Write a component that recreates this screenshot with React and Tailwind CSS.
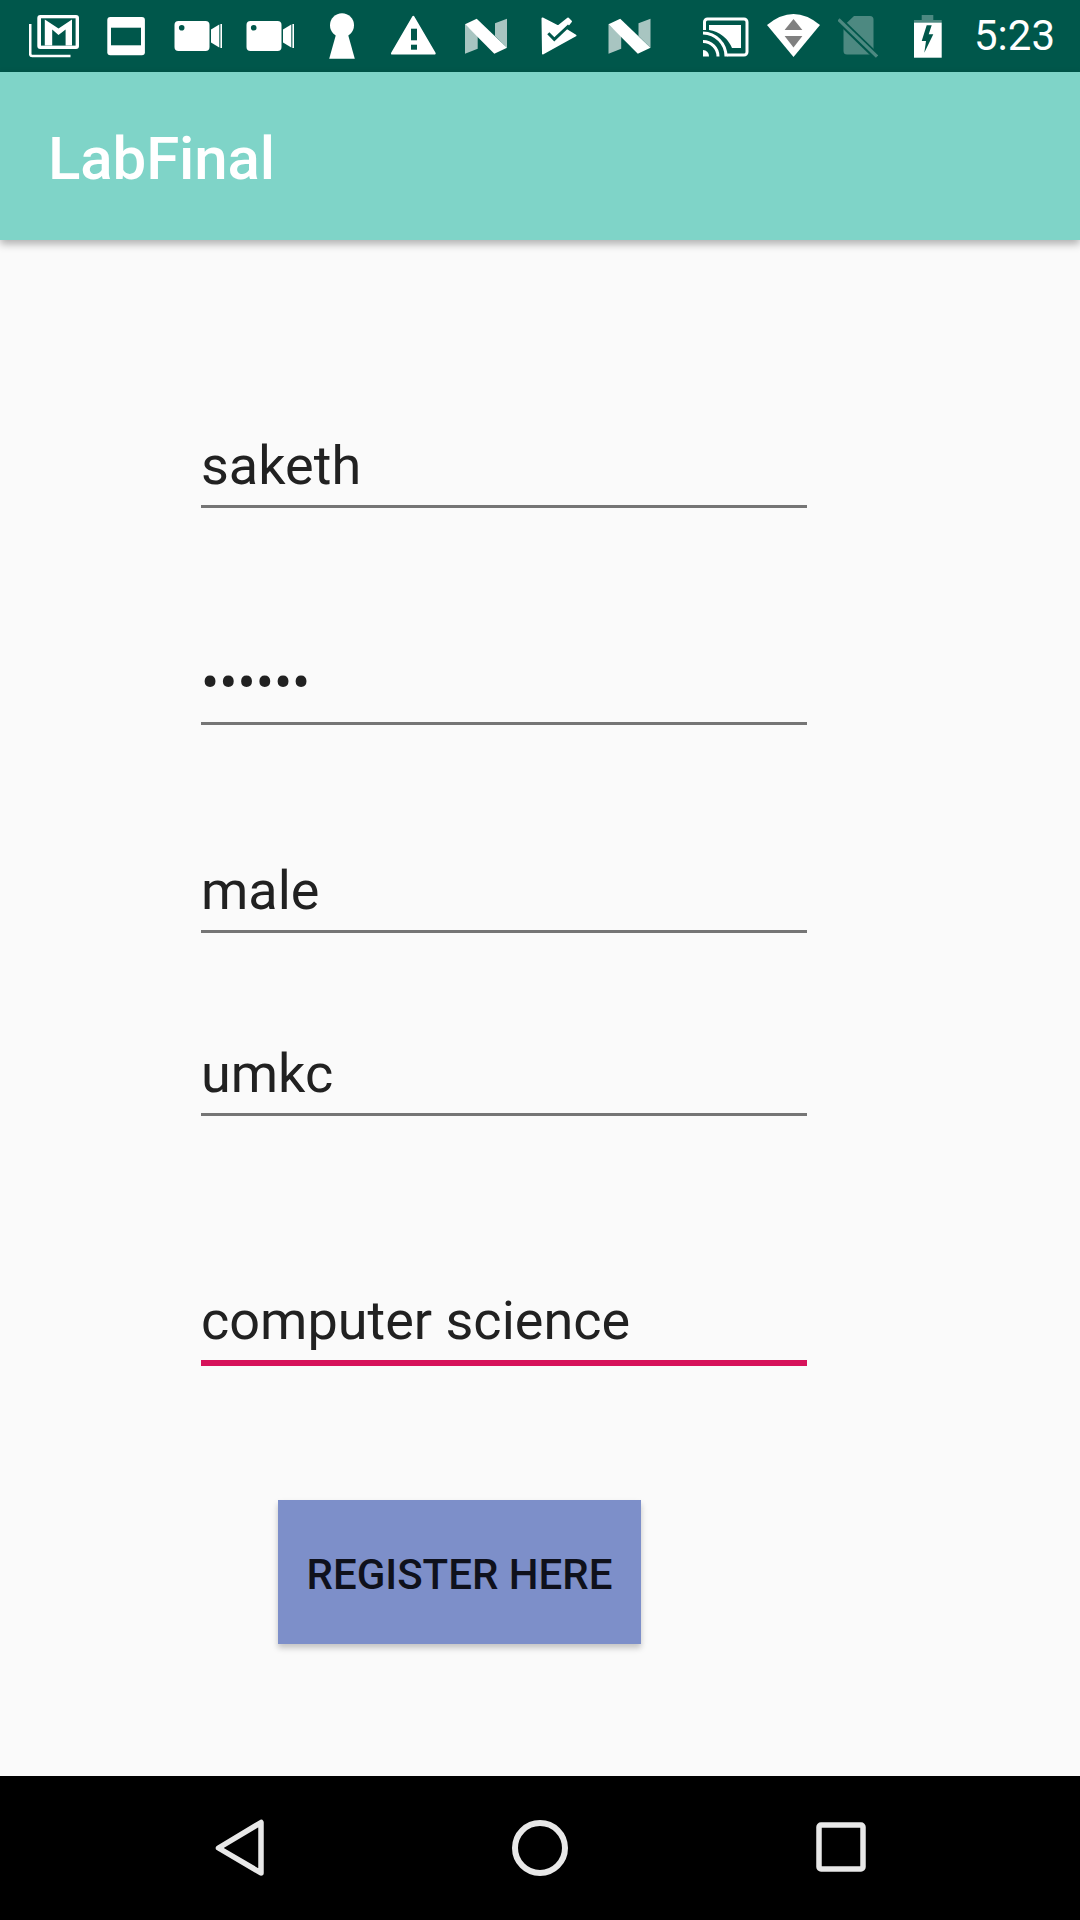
const DARK = "#00574b";
const DIM = "#4d8981";

function Ico({ x, w, className, children }) {
  return (
    <svg viewBox={`${x} 0 ${w} 72`} width={w} height={72} className={"block shrink-0 " + className}>
      {children}
    </svg>
  );
}

function Cam({ dx = 0 }) {
  return (
    <g transform={`translate(${dx} 0)`}>
      <rect x="174.5" y="21" width="35" height="30" rx="4" fill="#fff" />
      <circle cx="181.7" cy="27.7" r="2.8" fill={DARK} />
      <polygon points="211,29.5 219.3,24.5 219.3,47.5 211,42.5" fill="#fff" />
      <rect x="220.4" y="24" width="1.6" height="24" fill="#fff" />
    </g>
  );
}

function NIcon({ dx = 0 }) {
  return (
    <g transform={`translate(${dx} 0)`}>
      <polygon points="465,24.3 477.7,36 477.7,48.7 465,53.7" fill="#fff" fillOpacity="0.66" />
      <polygon points="495,23.3 507,18.7 507,47.7 495,36" fill="#fff" fillOpacity="0.66" />
      <polygon points="465,24.3 476.7,18.7 507,47.7 494.3,53.7" fill="#fff" />
    </g>
  );
}

function StatusBar() {
  return (
    <div className="flex h-[72px] items-start bg-[#00574b] pl-[29px]">
      <Ico x={29} w={50}>
        <path d="M30.2 24V54a2 2 0 0 0 2 2H70.5" fill="none" stroke="#fff" strokeWidth="2.6" />
        <rect x="37.3" y="15" width="41.7" height="34" rx="3" fill="#fff" />
        <rect x="41" y="18.3" width="34.6" height="27.3" fill={DARK} />
        <polygon points="44.800,45.600 44.800,19.500 58.500,28.500 72,19.500 72,45.600 65.600,45.600 65.600,29.500 58.500,35 52.200,29.500 52.200,45.600" fill="#fff" />
      </Ico>
      <Ico x={107} w={38} className="ml-[28px]">
        <rect x="107.3" y="17" width="37.6" height="38.3" rx="3" fill="#fff" />
        <rect x="111" y="27.7" width="30" height="17.6" fill={DARK} />
      </Ico>
      <Ico x={174} w={48} className="ml-[29px]">
        <Cam />
      </Ico>
      <Ico x={246} w={48} className="ml-[24px]">
        <Cam dx={72} />
      </Ico>
      <Ico x={329} w={26} className="ml-[35px]">
        <circle cx="342" cy="25.3" r="12" fill="#fff" />
        <polygon points="336.7,32 347.3,32 354.8,58.8 329.2,58.8" fill="#fff" />
      </Ico>
      <Ico x={390} w={47} className="ml-[35px]">
        <polygon points="413.3,17 434.5,53.4 392.2,53.4" fill="#fff" stroke="#fff" strokeWidth="2.4" strokeLinejoin="round" />
        <rect x="411" y="28.7" width="6" height="11.6" fill={DARK} />
        <rect x="411" y="44.7" width="6" height="5" fill={DARK} />
      </Ico>
      <Ico x={464} w={44} className="ml-[27px]">
        <NIcon />
      </Ico>
      <Ico x={540} w={38} className="ml-[32px]">
        <polygon points="542.500,18.500 558,26.500 568,18.500 571,21.500 565,29 575.500,35.500 543,53.500" fill="#fff" stroke="#fff" strokeWidth="2" strokeLinejoin="round" />
        <polyline points="548.300,33.300 554.300,39.300 569,25.500" fill="none" stroke={DARK} strokeWidth="3" />
      </Ico>
      <Ico x={608} w={44} className="ml-[30px]">
        <NIcon dx={143.5} />
      </Ico>
      <Ico x={701} w={48} className="ml-[49px]">
        <path d="M704.5 30V22a3 3 0 0 1 3-3H744a3 3 0 0 1 3 3V52a3 3 0 0 1-3 3H727" fill="none" stroke="#fff" strokeWidth="3" />
        <path d="M709 25H741V48H732A29 29 0 0 0 709 30Z" fill="#fff" />
        <path d="M703 50a6 6 0 0 1 6 6.500H703Z" fill="#fff" />
        <path d="M703 41.500A15 15 0 0 1 718 56.500" fill="none" stroke="#fff" strokeWidth="3" />
        <path d="M703 33A23.500 23.500 0 0 1 726 56.500" fill="none" stroke="#fff" strokeWidth="3" />
      </Ico>
      <Ico x={767} w={54} className="ml-[18px]">
        <path d="M767 25Q793.500 3 820 25L793.500 57Z" fill="#fff" />
        <polygon points="793.500,19 802.400,30 784.600,30" fill="#808080" />
        <polygon points="784.600,36 802.400,36 793.500,47.500" fill="#808080" />
      </Ico>
      <Ico x={838} w={40} className="ml-[17px]">
        <path d="M854 16H870a3.500 3.500 0 0 1 3.500 3.500V51a3.500 3.500 0 0 1-3.500 3.500H847a3.500 3.500 0 0 1-3.500-3.500V26Z" fill={DIM} />
        <line x1="838" y1="19" x2="877" y2="57" stroke={DARK} strokeWidth="7" />
        <line x1="838.500" y1="19.500" x2="877" y2="56.500" stroke={DIM} strokeWidth="3.200" />
      </Ico>
      <Ico x={914} w={28} className="ml-[36px]">
        <rect x="921.7" y="15" width="11.600" height="5" fill={DIM} />
        <rect x="914" y="20" width="27.700" height="3" fill={DIM} />
        <rect x="914" y="22.700" width="27.700" height="35" fill="#fff" />
        <polygon points="926.700,25.300 921.700,41 926,41 924.300,52.700 933.300,34.300 928.700,34.300 931.700,25.300" fill={DARK} />
      </Ico>
      <span className="ml-[32px] font-['Roboto',sans-serif] text-[42px] leading-[72px] text-white">5:23</span>
    </div>
  );
}

function Field({ className, line = "border-b-[3px] border-[#757575] leading-[59px]", children }) {
  return (
    <div className={"h-[72px] w-[606px] font-['Roboto',sans-serif] text-[54px] text-[#212121] " + line + " " + className}>
      {children}
    </div>
  );
}

export default function App() {
  return (
    <div className="flex h-[1920px] w-[1080px] flex-col overflow-hidden bg-[#fafafa]">
      <StatusBar />
      <header className="relative z-10 flex h-[168px] items-center bg-[#7fd4c8] pl-[48px] pt-[5px] font-['Roboto',sans-serif] text-[60px] font-medium tracking-[-0.1px] text-white shadow-[0_4px_8px_rgba(0,0,0,0.3)]">
        LabFinal
      </header>
      <main className="flex flex-1 flex-col items-start pl-[201px]">
        <Field className="mt-[196px]">saketh</Field>
        <Field className="mt-[145px]">••••••</Field>
        <Field className="mt-[136px]">male</Field>
        <Field className="mt-[111px]">umkc</Field>
        <Field className="mt-[178px]" line="border-b-[6px] border-[#d6125a] leading-[54px]">computer science</Field>
        <button className="ml-[77px] mt-[134px] flex h-[144px] w-[363px] items-center justify-center bg-[#7d8fc9] pt-[4px] font-['Roboto',sans-serif] text-[42px] font-medium text-[#0f111c] shadow-[0_4px_6px_rgba(0,0,0,0.22)]">
          REGISTER HERE
        </button>
      </main>
      <nav className="flex h-[144px] items-start bg-black pl-[213px] pt-[41px]">
        <svg viewBox="213 0 54 62" width="54" height="62" className="block shrink-0">
          <polygon points="218.500,31 261,5.500 261,56" fill="none" stroke="#e8e8e8" strokeWidth="5.500" strokeLinejoin="round" />
        </svg>
        <svg viewBox="0 0 60 60" width="60" height="60" className="ml-[243px] mt-[1px] block shrink-0">
          <circle cx="30" cy="30" r="25" fill="none" stroke="#e8e8e8" strokeWidth="6" />
        </svg>
        <svg viewBox="0 0 50 50" width="50" height="50" className="ml-[246px] mt-[5px] block shrink-0">
          <rect x="3" y="3" width="44" height="44" rx="2" fill="none" stroke="#e8e8e8" strokeWidth="5.500" />
        </svg>
      </nav>
    </div>
  );
}
